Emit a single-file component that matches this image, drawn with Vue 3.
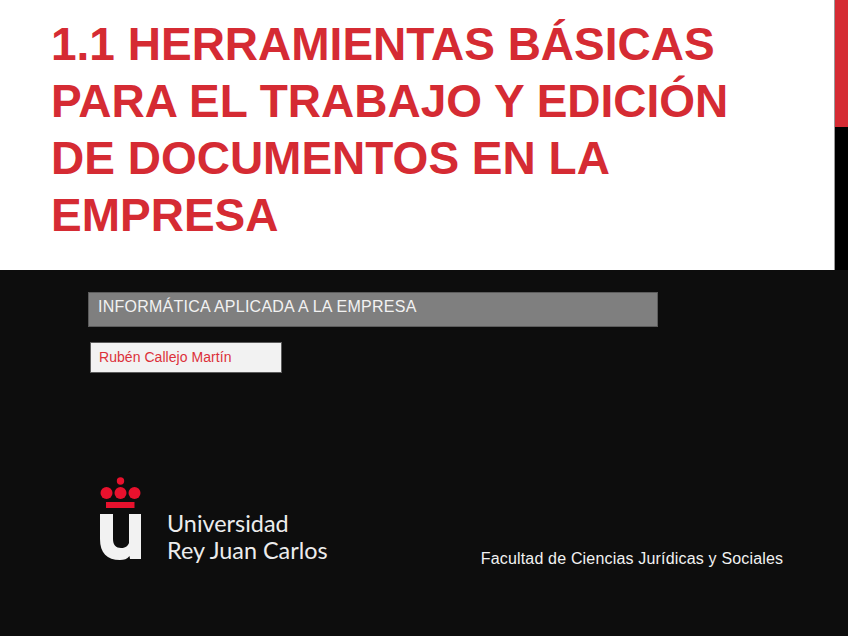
<script setup>
const titleLines = ['1.1 HERRAMIENTAS BÁSICAS', 'PARA EL TRABAJO Y EDICIÓN', 'DE DOCUMENTOS EN LA', 'EMPRESA']
</script>

<template>
  <div class="slide">
    <header class="top">
      <div class="title-panel">
        <h1 class="title">
          <span v-for="line in titleLines" :key="line" class="title-line">{{ line }}</span>
        </h1>
      </div>
      <div class="side">
        <div class="side-red"></div>
      </div>
    </header>
    <main class="bottom">
      <div class="subject">INFORMÁTICA APLICADA A LA EMPRESA</div>
      <div class="author">Rubén Callejo Martín</div>
      <div class="foot">
        <div class="logo">
          <svg class="mark" width="42" height="84" viewBox="0 0 42 84">
            <g fill="#e8112d">
              <circle cx="20.500" cy="4" r="3.700" />
              <circle cx="6.500" cy="16" r="6" />
              <circle cx="20.500" cy="16" r="6" />
              <circle cx="34.500" cy="16" r="6" />
              <rect x="6" y="25" width="28.500" height="6" />
            </g>
            <path d="M0 37H13V62C13 68 16 71 21 71C25 71 28 69 29 66V37H41V82H30L29.500 79C27 82 24 83 20 83C7 83 0 76 0 62Z" fill="#f2f2f2" />
          </svg>
          <div class="logo-text">
            <span>Universidad</span>
            <span>Rey Juan Carlos</span>
          </div>
        </div>
        <div class="faculty">Facultad de Ciencias Jurídicas y Sociales</div>
      </div>
    </main>
  </div>
</template>

<style scoped>
.slide {
  width: 848px;
  height: 636px;
  display: flex;
  flex-direction: column;
  background: #0d0d0d;
  font-family: "Liberation Sans", Arial, sans-serif;
  overflow: hidden;
}
.top {
  display: flex;
  height: 270px;
  flex: none;
}
.title-panel {
  width: 835px;
  box-sizing: border-box;
  background: #fff;
  border-right: 1px solid #9a9a9a;
  padding: 16px 0 0 51px;
}
.title {
  margin: 0;
  font-size: 46px;
  line-height: 57px;
  font-weight: 700;
  color: #d52b33;
}
.title-line {
  display: block;
  white-space: nowrap;
}
.side {
  flex: 1;
  background: #000;
}
.side-red {
  height: 127px;
  background: #d52b33;
}
.bottom {
  flex: 1;
  display: flex;
  flex-direction: column;
  padding: 22px 0 0 88px;
}
.subject {
  width: 570px;
  height: 35px;
  box-sizing: border-box;
  background: #7f7f7f;
  color: #f2f2f2;
  font-size: 16px;
  letter-spacing: 0.25px;
  line-height: 28px;
  padding-left: 9px;
  border: 1px solid #5c5c5c;
  white-space: nowrap;
}
.author {
  width: 192px;
  height: 31px;
  box-sizing: border-box;
  margin: 15px 0 0 2px;
  background: #f2f2f2;
  color: #dc3039;
  font-size: 14px;
  letter-spacing: 0.05px;
  line-height: 29px;
  padding-left: 8px;
  border: 1px solid #5c5c5c;
}
.foot {
  display: flex;
  align-items: flex-end;
  margin-top: 104px;
}
.logo {
  display: flex;
  align-items: flex-end;
  margin-left: 12px;
}
.mark {
  display: block;
  flex: none;
}
.logo-text {
  display: flex;
  flex-direction: column;
  margin: 0 0 -3px 25px;
  font-family: Lato, sans-serif;
  font-size: 23.4px;
  line-height: 27px;
  color: #ececec;
  white-space: nowrap;
}
.faculty {
  margin: 0 0 -8px 153px;
  color: #f2f2f2;
  font-size: 16px;
  letter-spacing: 0.18px;
  line-height: 20px;
  white-space: nowrap;
}
</style>
